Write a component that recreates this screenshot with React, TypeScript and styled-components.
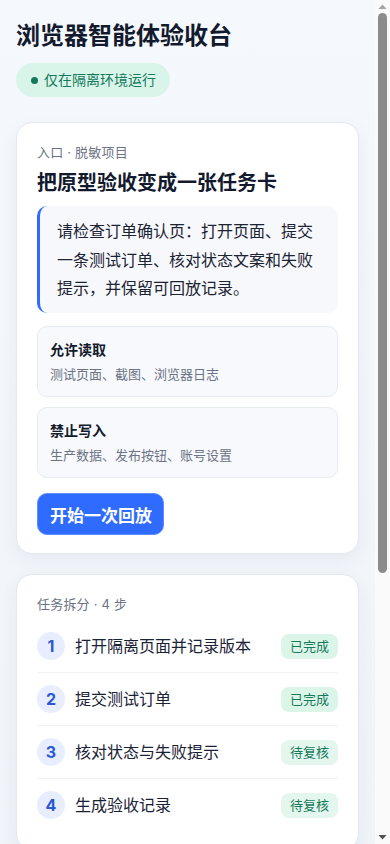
import React from "react";
import styled, { createGlobalStyle } from "styled-components";

const Global = createGlobalStyle`
  html, body { margin: 0; padding: 0; }
  body {
    background: linear-gradient(180deg, #f5f8fc 0%, #eef2f8 100%);
    font-family: Inter, "Noto Sans CJK SC", "Noto Sans", sans-serif;
    color: #141b2d;
    -webkit-font-smoothing: antialiased;
  }
  * { box-sizing: border-box; }
`;

const Shell = styled.div`
  display: flex;
  align-items: flex-start;
`;

const Rail = styled.div`
  flex: none;
  position: sticky;
  top: 0;
  width: 15px;
  height: 100vh;
  background: #fafafa;
  display: flex;
  flex-direction: column;
  align-items: center;
`;

const RailArrow = styled.svg`
  flex: none;
  width: 15px;
  height: 13px;
`;

const RailTrack = styled.div`
  flex: 1;
  width: 100%;
  display: flex;
  justify-content: center;
`;

const RailThumb = styled.div`
  width: 9px;
  height: 560px;
  border-radius: 5px;
  background: #8b8b8b;
`;

const Page = styled.main`
  flex: 1;
  min-width: 0;
  padding: 20px 16px 24px;
  display: flex;
  flex-direction: column;
`;

const Header = styled.header`
  display: flex;
  flex-direction: column;
  align-items: flex-start;
  margin-bottom: 25px;
`;

const Title = styled.h1`
  margin: 0 0 12px;
  font-size: 24px;
  line-height: 31px;
  font-weight: 700;
  color: #131a2e;
`;

const EnvBadge = styled.div`
  display: inline-flex;
  align-items: center;
  gap: 6px;
  padding: 7px 14px 7px 15px;
  border-radius: 999px;
  background: #d9f5ea;
  color: #15795a;
  font-size: 14px;
  line-height: 20px;
`;

const Dot = styled.span`
  width: 7px;
  height: 7px;
  border-radius: 50%;
  background: #15795a;
`;

const Stack = styled.div`
  display: flex;
  flex-direction: column;
  gap: 20px;
`;

const Card = styled.section`
  background: #ffffff;
  border: 1px solid #e4e9f1;
  border-radius: 16px;
  padding: 20px 20px 18px;
  box-shadow: 0 6px 18px rgba(30, 50, 90, 0.06);
  display: flex;
  flex-direction: column;
`;

const Kicker = styled.div`
  font-size: 13px;
  line-height: 18px;
  color: #6b7385;
  letter-spacing: 0.2px;
`;

const Heading = styled.h2`
  margin: 8px 0 9px;
  font-size: 20px;
  line-height: 28px;
  font-weight: 700;
  color: #131a2e;
`;

const Quote = styled.blockquote`
  margin: 0 0 13px;
  padding: 11px 16px 10px 17px;
  border-left: 3px solid #2f6bff;
  border-radius: 10px;
  background: #f6f8fc;
  font-size: 16px;
  line-height: 28.7px;
  color: #1c2333;
`;

const PermList = styled.div`
  display: flex;
  flex-direction: column;
  gap: 10px;
  margin-bottom: 15px;
`;

const Perm = styled.div`
  border: 1px solid #e7ebf2;
  background: #f8f9fc;
  border-radius: 10px;
  padding: 13px 12px 13px;
  display: flex;
  flex-direction: column;
  gap: 5px;
`;

const PermTitle = styled.div`
  font-size: 14px;
  line-height: 20px;
  font-weight: 700;
  color: #141b2d;
`;

const PermDesc = styled.div`
  font-size: 13px;
  line-height: 18px;
  color: #6b7385;
`;

const PrimaryButton = styled.button`
  align-self: flex-start;
  height: 42px;
  padding: 0 11px 0 12px;
  border: 1px solid #5f8cff;
  border-radius: 10px;
  background: #2f6bff;
  color: #ffffff;
  font-family: inherit;
  font-size: 17px;
  font-weight: 700;
  cursor: pointer;
`;

const Steps = styled.ol`
  list-style: none;
  margin: 7px 0 0;
  padding: 0;
  display: flex;
  flex-direction: column;
`;

const Step = styled.li`
  display: flex;
  align-items: center;
  gap: 10px;
  padding: 12px 0;
  border-bottom: 1px solid #f0f2f6;
  &:last-child { border-bottom: none; }
`;

const StepNum = styled.span`
  flex: none;
  width: 28px;
  height: 28px;
  border-radius: 50%;
  background: #e8eeff;
  color: #2a58d6;
  font-size: 16px;
  font-weight: 700;
  display: flex;
  align-items: center;
  justify-content: center;
`;

const StepText = styled.span`
  flex: 1;
  font-size: 16px;
  line-height: 22px;
  color: #1a2236;
`;

const StatusTag = styled.span<{ $done: boolean }>`
  flex: none;
  padding: 3px 9px;
  border-radius: 8px;
  background: ${(p) => (p.$done ? "#dbf5e9" : "#e3f7ef")};
  color: #18795a;
  font-size: 13px;
  line-height: 19px;
`;

const InfoRow = styled.div`
  display: flex;
  justify-content: space-between;
  padding: 12px 0;
  border-bottom: 1px solid #f0f2f6;
  font-size: 14px;
  line-height: 20px;
  &:last-child { border-bottom: none; }
`;

const InfoKey = styled.span`
  color: #6b7385;
`;

const InfoValue = styled.span`
  color: #1c2333;
`;

const steps = [
  { text: "打开隔离页面并记录版本", done: true },
  { text: "提交测试订单", done: true },
  { text: "核对状态与失败提示", done: false },
  { text: "生成验收记录", done: false },
];

const records = [
  ["运行环境", "隔离沙箱"],
  ["页面版本", "v2.3.1-preview"],
  ["截图数量", "6 张"],
  ["浏览器日志", "已保存"],
  ["回放状态", "可回放"],
];

export default function App() {
  return (
    <Shell>
      <Global />
      <Page>
        <Header>
          <Title>浏览器智能体验收台</Title>
          <EnvBadge>
            <Dot />
            仅在隔离环境运行
          </EnvBadge>
        </Header>
        <Stack>
          <Card>
            <Kicker>入口 · 脱敏项目</Kicker>
            <Heading>把原型验收变成一张任务卡</Heading>
            <Quote>
              请检查订单确认页：打开页面、提交一条测试订单、核对状态文案和失败提示，并保留可回放记录。
            </Quote>
            <PermList>
              <Perm>
                <PermTitle>允许读取</PermTitle>
                <PermDesc>测试页面、截图、浏览器日志</PermDesc>
              </Perm>
              <Perm>
                <PermTitle>禁止写入</PermTitle>
                <PermDesc>生产数据、发布按钮、账号设置</PermDesc>
              </Perm>
            </PermList>
            <PrimaryButton type="button">开始一次回放</PrimaryButton>
          </Card>
          <Card>
            <Kicker>任务拆分 · 4 步</Kicker>
            <Steps>
              {steps.map((s, i) => (
                <Step key={s.text}>
                  <StepNum>{i + 1}</StepNum>
                  <StepText>{s.text}</StepText>
                  <StatusTag $done={s.done}>{s.done ? "已完成" : "待复核"}</StatusTag>
                </Step>
              ))}
            </Steps>
          </Card>
          <Card>
            <Kicker>回放记录 · 最近一次</Kicker>
            <Heading>订单确认页验收</Heading>
            <div>
              {records.map(([k, v]) => (
                <InfoRow key={k}>
                  <InfoKey>{k}</InfoKey>
                  <InfoValue>{v}</InfoValue>
                </InfoRow>
              ))}
            </div>
          </Card>
        </Stack>
      </Page>
      <Rail aria-hidden="true">
        <RailArrow viewBox="0 0 15 13">
          <path d="M3.5 9 L7.5 4.5 L11.5 9 Z" fill="#a3a3a3" />
        </RailArrow>
        <RailTrack>
          <RailThumb />
        </RailTrack>
        <RailArrow viewBox="0 0 15 13">
          <path d="M3.5 4 L7.5 8.5 L11.5 4 Z" fill="#505050" />
        </RailArrow>
      </Rail>
    </Shell>
  );
}
